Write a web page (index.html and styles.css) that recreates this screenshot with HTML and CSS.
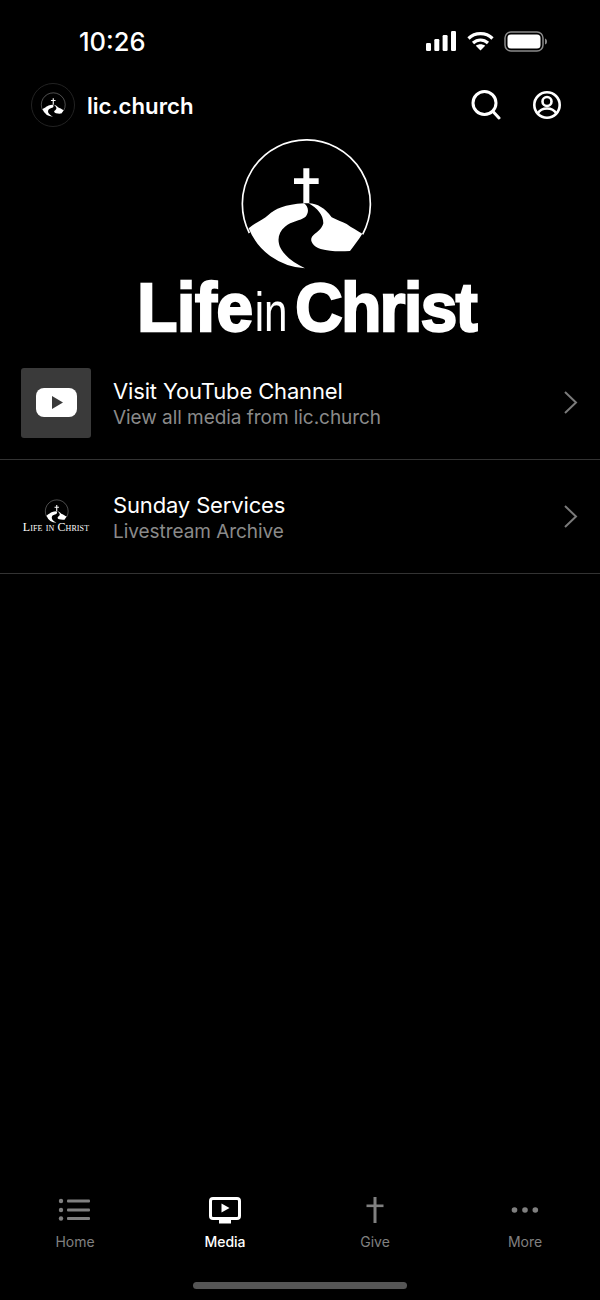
FILE: index.html
```html
<!DOCTYPE html>
<html lang="en">
<head>
    <meta charset="UTF-8">
    <meta name="viewport" content="width=device-width, initial-scale=1.0">
    <title>lic.church</title>
    <link rel="stylesheet" href="styles.css">
</head>
<body>
    <svg class="defs" width="0" height="0">
        <symbol id="hill" viewBox="0 0 450 420">
            <path fill="none" stroke="#fff" stroke-width="5" d="M58 294A192 192 0 1 1 398 298"/>
            <path fill="#fff" d="M220 100h18v30h28v17h-28v58h-18v-58h-28v-17h28z"/>
            <path fill="#fff" d="M56 280C75 262 100 255 115 240C135 222 165 208 222 205C236 215 238 232 226 246C210 258 185 258 165 275C145 292 140 315 152 340C165 365 195 385 225 400A192 192 0 0 1 56 280z"/>
            <path fill="#fff" d="M236 205C262 205 285 220 305 247C320 255 335 260 350 267C365 278 382 287 397 296C385 315 372 332 360 348C330 350 300 350 272 342C250 334 238 318 246 305C258 292 275 285 280 265C280 240 262 220 236 205z"/>
        </symbol>
    </svg>

    <div class="screen">
        <div class="status">
            <span class="time">10:26</span>
            <div class="status-icons">
                <svg width="31" height="20" viewBox="0 0 31 20" fill="#fff">
                    <rect x="0" y="12" width="5" height="8" rx="1.2"/>
                    <rect x="8.300" y="8" width="5" height="12" rx="1.2"/>
                    <rect x="16.600" y="4" width="5" height="16" rx="1.2"/>
                    <rect x="25" y="0" width="5" height="20" rx="1.2"/>
                </svg>
                <svg width="27" height="20" viewBox="0 0 27 20" fill="none" stroke="#fff" stroke-width="3.200">
                    <path d="M1.500 7.500C8 1 19 1 25.500 7.500"/>
                    <path d="M6 12C10.500 8 16.500 8 21 12"/>
                    <path fill="#fff" stroke="none" d="M13.500 19.500L8.800 14.800C11.500 12.800 15.500 12.800 18.200 14.800z"/>
                </svg>
                <svg width="43" height="21" viewBox="0 0 43 21">
                    <rect x="1" y="1" width="38" height="19" rx="6" fill="none" stroke="#8a8a8a" stroke-width="1.500"/>
                    <rect x="3.500" y="3.500" width="33" height="14" rx="3.500" fill="#fff"/>
                    <path d="M41 7.500c1.500.5 2 1.500 2 3s-.5 2.500-2 3z" fill="#8a8a8a"/>
                </svg>
            </div>
        </div>

        <div class="topbar">
            <div class="brand">
                <span class="avatar"><svg width="28" height="28"><use href="#hill"/></svg></span>
                <span class="brand-name">lic.church</span>
            </div>
            <div class="top-actions">
                <svg width="30" height="30" viewBox="0 0 30 30" fill="none" stroke="#fff" stroke-width="3" stroke-linecap="round">
                    <circle cx="13.500" cy="13" r="11.500"/>
                    <path d="M22 21.500L28 28"/>
                </svg>
                <svg width="30" height="30" viewBox="0 0 30 30" fill="none" stroke="#fff" stroke-width="2.600">
                    <circle cx="15" cy="15" r="12.700"/>
                    <circle cx="15" cy="11.500" r="4.500"/>
                    <path d="M5.500 23.500C8 19.500 11 18.500 15 18.500S22 19.500 24.500 23.500"/>
                </svg>
            </div>
        </div>

        <div class="hero">
            <svg class="hero-mark" width="150" height="140"><use href="#hill"/></svg>
            <div class="wordmark">Life<span class="thin">in</span><span class="christ">Christ</span></div>
        </div>

        <div class="list">
            <div class="row">
                <div class="thumb thumb-yt">
                    <svg width="41" height="29" viewBox="0 0 41 29">
                        <rect width="41" height="29" rx="8" fill="#fff"/>
                        <path d="M16 8l11 6.500L16 21z" fill="#3a3a3a"/>
                    </svg>
                </div>
                <div class="row-text">
                    <div class="row-title">Visit YouTube Channel</div>
                    <div class="row-sub">View all media from lic.church</div>
                </div>
                <svg class="chevron" width="15" height="25" viewBox="0 0 15 25" fill="none" stroke="#7a7a7a" stroke-width="2">
                    <path d="M2 2l11 10.500L2 23"/>
                </svg>
            </div>
            <div class="row">
                <div class="thumb">
                    <svg width="27" height="25"><use href="#hill"/></svg>
                    <span class="thumb-label">Life in Christ</span>
                </div>
                <div class="row-text">
                    <div class="row-title">Sunday Services</div>
                    <div class="row-sub">Livestream Archive</div>
                </div>
                <svg class="chevron" width="15" height="25" viewBox="0 0 15 25" fill="none" stroke="#7a7a7a" stroke-width="2">
                    <path d="M2 2l11 10.500L2 23"/>
                </svg>
            </div>
        </div>

        <div class="tabs">
            <div class="tab">
                <svg width="34" height="30" viewBox="0 0 34 30" fill="#808080">
                    <circle cx="3" cy="5" r="2.200"/>
                    <circle cx="3" cy="14" r="2.200"/>
                    <circle cx="3" cy="22.500" r="2.200"/>
                    <rect x="9" y="3.500" width="23" height="3" rx="1"/>
                    <rect x="9" y="12.500" width="23" height="3" rx="1"/>
                    <rect x="9" y="21" width="23" height="3" rx="1"/>
                </svg>
                <span>Home</span>
            </div>
            <div class="tab active">
                <svg width="34" height="30" viewBox="0 0 34 30" fill="#fff">
                    <rect x="2.500" y="2.500" width="29" height="20" rx="2.500" fill="none" stroke="#fff" stroke-width="3"/>
                    <rect x="11" y="24" width="12" height="3.500"/>
                    <path d="M13.500 10.500l8 4.500-8 4.500z" transform="translate(0 -3)"/>
                </svg>
                <span>Media</span>
            </div>
            <div class="tab">
                <svg width="34" height="30" viewBox="0 0 34 30" fill="#808080">
                    <rect x="15.500" y="1" width="3" height="26"/>
                    <rect x="8.500" y="8.500" width="17" height="2.600"/>
                </svg>
                <span>Give</span>
            </div>
            <div class="tab">
                <svg width="34" height="30" viewBox="0 0 34 30" fill="#808080">
                    <circle cx="6.500" cy="14" r="2.800"/>
                    <circle cx="17" cy="14" r="2.800"/>
                    <circle cx="27.300" cy="14" r="2.800"/>
                </svg>
                <span>More</span>
            </div>
        </div>
        <div class="home-bar"></div>
    </div>
</body>
</html>
```

FILE: styles.css
```css
html, body { margin: 0; background: #000; }
body { font-family: Inter, "Liberation Sans", sans-serif; color: #fff; }
.defs { display: block; height: 0; }
.screen { width: 600px; height: 1300px; display: flex; flex-direction: column; overflow: hidden; }

.status { height: 30px; padding: 26px 53px 0 79px; display: flex; justify-content: space-between; align-items: center; }
.time { font-size: 25.500px; font-weight: 500; }
.status-icons { display: flex; align-items: center; gap: 10px; }

.topbar { height: 46px; margin-top: 26px; padding: 0 38px 0 31px; display: flex; justify-content: space-between; align-items: center; }
.brand { display: flex; align-items: center; gap: 12px; }
.avatar { width: 44px; height: 44px; border: 1px solid #222; border-radius: 50%; display: flex; align-items: center; justify-content: center; box-sizing: border-box; }
.brand-name { font-size: 22.200px; font-weight: 600; }
.top-actions { display: flex; align-items: center; gap: 31px; }

.hero { height: 211px; margin-top: 7px; display: flex; flex-direction: column; align-items: center; }
.hero-mark { flex: none; margin-left: 10px; }
.wordmark { font-family: "Liberation Sans", Arial, sans-serif; font-weight: bold; font-size: 68px; line-height: 56px; letter-spacing: -0.300px; margin-top: 4px; margin-left: 14px; -webkit-text-stroke: 2.400px #fff; white-space: nowrap; transform: scaleX(0.965); }
.thin { display: inline-block; font-weight: normal; font-size: 56px; letter-spacing: 0; margin: 0 3.500px 0 -3px; -webkit-text-stroke: 0; transform: scaleX(0.78); }
.christ { letter-spacing: -1.500px; }

.list { display: flex; flex-direction: column; }
.row { height: 113px; padding: 0 22px 0 21px; border-bottom: 1px solid #333; display: flex; align-items: center; gap: 22px; }
.thumb { width: 70px; height: 70px; flex: none; display: flex; flex-direction: column; align-items: center; justify-content: center; border-radius: 3px; }
.thumb-yt { background: #3a3a3a; }
.thumb-label { font-family: "Liberation Serif", serif; font-variant: small-caps; font-size: 12px; line-height: 13px; letter-spacing: 0.100px; margin-top: -3px; white-space: nowrap; }
.row-text { flex: 1; display: flex; flex-direction: column; margin-top: 2px; }
.row-title { font-size: 22px; line-height: 27px; letter-spacing: -0.150px; }
.row-sub { font-size: 19px; line-height: 25px; letter-spacing: -0.050px; color: #8a8a8a; }

.tabs { margin-top: auto; display: grid; grid-template-columns: repeat(4, 1fr); }
.tab { display: flex; flex-direction: column; align-items: center; gap: 6px; color: #808080; font-size: 14px; line-height: 20px; }
.tab svg { margin-top: -3px; }
.tab.active { color: #fff; font-weight: 500; }
.home-bar { width: 214px; height: 7px; margin: 30px auto 11px; border-radius: 4px; background: #555; }
```
